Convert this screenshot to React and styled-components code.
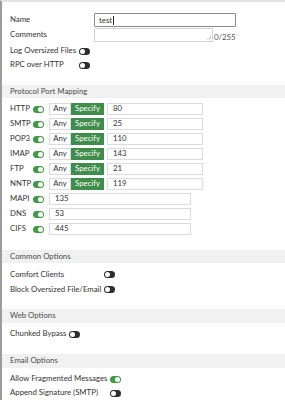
import React from "react";
import styled, { createGlobalStyle } from "styled-components";

const Global = createGlobalStyle`
  html, body { margin: 0; padding: 0; background: #fff; }
  body { font-family: Lato, "Open Sans", sans-serif; font-size: 7.8px; color: #333; }
  * { box-sizing: border-box; }
`;

const Page = styled.div`
  width: 285px;
  height: 400px;
  overflow: hidden;
  border-left: 2px solid #9c9c9c;
  border-top: 2px solid #e2e2e2;
  display: flex;
  flex-direction: column;
`;

const Block = styled.div`
  padding: 0 0 0 8px;
  margin-top: ${(p) => p.$mt || 0}px;
`;

const FieldGrid = styled.div`
  display: grid;
  grid-template-columns: 84px auto;
  row-gap: 1px;
  align-items: center;
`;

const Label = styled.div`
  white-space: nowrap;
  color: #333;
  line-height: 1;
`;

const TextInput = styled.div`
  width: 142px;
  height: 14px;
  border: 1px solid #8c8c8c;
  border-radius: 1px;
  padding-left: 4px;
  display: flex;
  align-items: center;
  color: #333;
`;

const Caret = styled.span`
  display: inline-block;
  width: 1px;
  height: 9px;
  background: #222;
  margin-left: 0.5px;
`;

const AreaWrap = styled.div`
  display: flex;
  align-items: flex-end;
  gap: 1px;
`;

const TextArea = styled.div`
  position: relative;
  width: 119px;
  height: 14px;
  border: 1px solid #d4d4d4;
`;

const Grip = styled.svg`
  position: absolute;
  right: 1px;
  bottom: 1px;
`;

const Counter = styled.span`
  color: #555;
  line-height: 1;
`;

const ToggleGrid = styled.div`
  display: grid;
  grid-template-columns: max-content 11px;
  column-gap: 3px;
  grid-auto-rows: ${(p) => p.$row || 14}px;
  align-items: center;
`;

const Toggle = styled.span`
  position: relative;
  display: inline-block;
  width: 11px;
  height: 7px;
  border-radius: 4px;
  background: ${(p) => (p.$on ? "#3e9a45" : "#2e2e2e")};
  &::after {
    content: "";
    position: absolute;
    top: 1px;
    left: ${(p) => (p.$on ? "5px" : "1px")};
    width: 5px;
    height: 5px;
    border-radius: 50%;
    background: #fff;
  }
`;

const SectionHeader = styled.div`
  height: ${(p) => p.$h || 13}px;
  margin-top: ${(p) => p.$mt || 0}px;
  background: #f1f1f1;
  color: #4a4a4a;
  padding-left: 8px;
  display: flex;
  align-items: center;
  line-height: 1;
`;

const PortGrid = styled.div`
  display: grid;
  grid-template-columns: 23px 11px auto;
  grid-auto-rows: 12px;
  row-gap: 3px;
  align-items: center;
  padding-left: 8px;
  margin-top: ${(p) => p.$mt || 0}px;
`;

const Controls = styled.div`
  display: flex;
  height: 12px;
  margin-left: 5px;
`;

const Seg = styled.div`
  height: 12px;
  width: ${(p) => p.$w}px;
  display: flex;
  align-items: center;
  justify-content: center;
  background: ${(p) => (p.$active ? "#3f8d4b" : "#fff")};
  color: ${(p) => (p.$active ? "#fff" : "#333")};
  border: 1px solid ${(p) => (p.$active ? "#3f8d4b" : "#dcdcdc")};
  line-height: 1;
`;

const PortInput = styled.div`
  height: 12px;
  width: ${(p) => p.$w}px;
  margin-left: ${(p) => p.$ml || 0}px;
  border: 1px solid #dcdcdc;
  padding-left: 5px;
  display: flex;
  align-items: center;
  color: #333;
  line-height: 1;
`;

const specRows = [
  ["HTTP", "80"],
  ["SMTP", "25"],
  ["POP3", "110"],
  ["IMAP", "143"],
  ["FTP", "21"],
  ["NNTP", "119"],
];
const plainRows = [
  ["MAPI", "135"],
  ["DNS", "53"],
  ["CIFS", "445"],
];

function ToggleSection({ items, mt, row }) {
  return (
    <Block $mt={mt}>
      <ToggleGrid $row={row}>
        {items.map(([label, on]) => (
          <React.Fragment key={label}>
            <Label>{label}</Label>
            <Toggle $on={on} />
          </React.Fragment>
        ))}
      </ToggleGrid>
    </Block>
  );
}

export default function App() {
  return (
    <>
      <Global />
      <Page>
        <Block $mt={11}>
          <FieldGrid>
            <Label>Name</Label>
            <TextInput>
              test
              <Caret />
            </TextInput>
            <Label>Comments</Label>
            <AreaWrap>
              <TextArea>
                <Grip width="4" height="4" viewBox="0 0 4 4">
                  <path d="M4 0L0 4M4 2L2 4" stroke="#aaa" strokeWidth="0.6" />
                </Grip>
              </TextArea>
              <Counter>0/255</Counter>
            </AreaWrap>
          </FieldGrid>
        </Block>
        <ToggleSection
          mt={2}
          items={[
            ["Log Oversized Files", false],
            ["RPC over HTTP", false],
          ]}
        />
        <SectionHeader $mt={13}>Protocol Port Mapping</SectionHeader>
        <PortGrid $mt={5}>
          {specRows.map(([l, v]) => (
            <React.Fragment key={l}>
              <Label>{l}</Label>
              <Toggle $on />
              <Controls>
                <Seg $w={22}>Any</Seg>
                <Seg $w={33} $active>
                  Specify
                </Seg>
                <PortInput $w={96} $ml={3}>
                  {v}
                </PortInput>
              </Controls>
            </React.Fragment>
          ))}
          {plainRows.map(([l, v]) => (
            <React.Fragment key={l}>
              <Label>{l}</Label>
              <Toggle $on />
              <Controls>
                <PortInput $w={142}>{v}</PortInput>
              </Controls>
            </React.Fragment>
          ))}
        </PortGrid>
        <SectionHeader $mt={15}>Common Options</SectionHeader>
        <ToggleSection
          mt={4}
          row={15}
          items={[
            ["Comfort Clients", false],
            ["Block Oversized File/Email", false],
          ]}
        />
        <SectionHeader $mt={12} $h={14}>Web Options</SectionHeader>
        <ToggleSection mt={4} items={[["Chunked Bypass", false]]} />
        <SectionHeader $mt={13} $h={14}>Email Options</SectionHeader>
        <ToggleSection
          mt={4}
          row={14}
          items={[
            ["Allow Fragmented Messages", true],
            ["Append Signature (SMTP)", false],
          ]}
        />
      </Page>
    </>
  );
}
